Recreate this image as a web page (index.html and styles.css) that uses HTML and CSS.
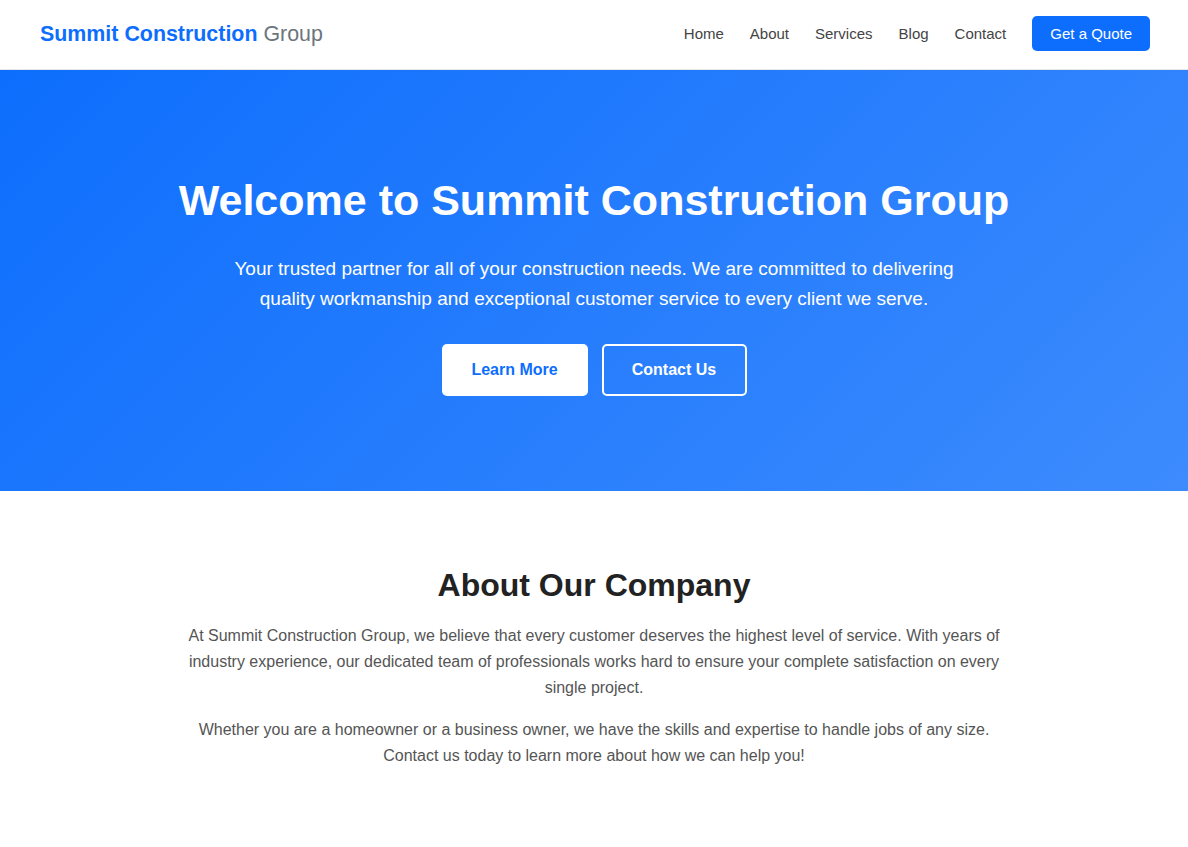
FILE: index.html
```html
<!DOCTYPE html>
<html lang="en">
<head>
<meta charset="utf-8">
<title>Summit Construction Group</title>
<link rel="stylesheet" href="styles.css">
</head>
<body>
<header class="site-header">
  <a class="logo" href="#"><span class="logo-main">Summit Construction</span> <span class="logo-sub">Group</span></a>
  <nav class="nav">
    <a href="#">Home</a>
    <a href="#">About</a>
    <a href="#">Services</a>
    <a href="#">Blog</a>
    <a href="#">Contact</a>
    <a class="btn-quote" href="#">Get a Quote</a>
  </nav>
</header>
<section class="hero">
  <h1>Welcome to Summit Construction Group</h1>
  <p class="hero-text">Your trusted partner for all of your construction needs. We are committed to delivering quality workmanship and exceptional customer service to every client we serve.</p>
  <div class="hero-actions">
    <a class="btn btn-light" href="#">Learn More</a>
    <a class="btn btn-outline" href="#">Contact Us</a>
  </div>
</section>
<section class="about">
  <h2>About Our Company</h2>
  <p>At Summit Construction Group, we believe that every customer deserves the highest level of service. With years of industry experience, our dedicated team of professionals works hard to ensure your complete satisfaction on every single project.</p>
  <p>Whether you are a homeowner or a business owner, we have the skills and expertise to handle jobs of any size. Contact us today to learn more about how we can help you!</p>
</section>
</body>
</html>
```
FILE: styles.css
```css
* { box-sizing: border-box; }
body {
  margin: 0;
  font-family: "Liberation Sans", Arial, sans-serif;
  background: #fff;
  color: #333;
}
a { text-decoration: none; }
.site-header {
  height: 70px;
  display: flex;
  align-items: center;
  justify-content: space-between;
  padding: 0 38px 2px 40px;
  background: #fff;
  border-bottom: 1px solid #e6e6e6;
}
.logo { font-size: 21.4px; padding-top: 1px; }
.logo-main { color: #0d6efd; font-weight: 700; }
.logo-sub { color: #6c757d; }
.nav { display: flex; align-items: center; }
.nav a {
  color: #444;
  font-size: 15px;
  margin-left: 26px;
}
.nav a:first-child { margin-left: 0; }
.nav .btn-quote {
  background: #0d6efd;
  color: #fff;
  padding: 9px 18px;
  border-radius: 5px;
  height: 35px;
  line-height: 17px;
}
.hero {
  height: 421px;
  background: linear-gradient(135deg, #0d6efd 0%, #3d8bfd 100%);
  color: #fff;
  text-align: center;
  display: flex;
  flex-direction: column;
  align-items: center;
  padding-top: 103px;
}
.hero h1 {
  margin: 0;
  font-size: 43px;
  line-height: 54px;
  font-weight: 700;
}
.hero-text {
  margin: 27px 0 0;
  max-width: 740px;
  font-size: 19px;
  line-height: 30px;
}
.hero-actions {
  display: flex;
  gap: 14px;
  margin-top: 30px;
}
.btn {
  display: inline-flex;
  align-items: center;
  justify-content: center;
  height: 52px;
  width: 146px;
  border-radius: 5px;
  font-size: 16px;
  font-weight: 700;
}
.btn-light { background: #fff; color: #0d6efd; }
.btn-outline { border: 2px solid #fff; color: #fff; width: 145px; }
.about {
  padding: 74px 0 60px;
  text-align: center;
}
.about h2 {
  margin: 0 0 18px;
  font-size: 32px;
  line-height: 40px;
  color: #222;
}
.about p {
  max-width: 830px;
  margin: 0 auto 16px;
  font-size: 16px;
  line-height: 26px;
  color: #555;
}
```
